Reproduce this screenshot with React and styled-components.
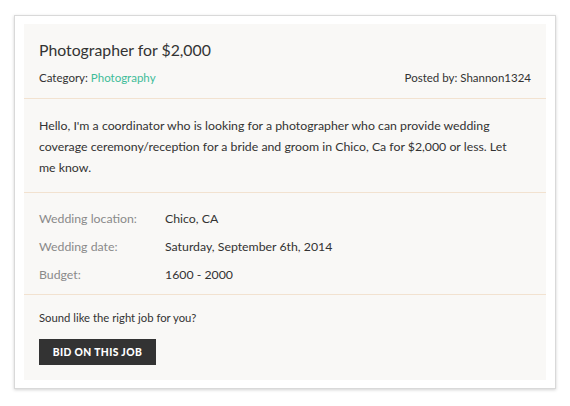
import React from "react";
import styled, { createGlobalStyle } from "styled-components";

const Global = createGlobalStyle`
  html, body { margin: 0; padding: 0; background: #fff; }
  body { font-family: "Lato", "Noto Sans", sans-serif; color: #333; }
`;

const Page = styled.div`
  padding: 15px 14px 16px 14px;
`;

const Frame = styled.div`
  background: #fff;
  border: 1px solid #d9d9d9;
  box-shadow: 0 1px 3px rgba(0,0,0,0.18);
  padding: 8px 9px 8px 9px;
`;

const Panel = styled.div`
  background: #f9f8f6;
`;

const Section = styled.div`
  padding: ${(p) => p.$pad};
  border-bottom: ${(p) => (p.$last ? "none" : "1px solid #f2e2d0")};
`;

const Title = styled.h1`
  margin: 0;
  font-size: 15.8px;
  font-weight: 400;
  line-height: 20px;
  color: #333;
`;

const MetaRow = styled.div`
  display: flex;
  justify-content: space-between;
  margin-top: 11px;
  font-size: 11.5px;
  line-height: 14px;
  color: #333;
`;

const Link = styled.a`
  color: #3fbc99;
  text-decoration: none;
`;

const Body = styled.p`
  margin: 0;
  max-width: 472px;
  font-size: 12.3px;
  line-height: 21px;
  color: #333;
`;

const Details = styled.div`
  display: grid;
  grid-template-columns: 126px 1fr;
  row-gap: 12px;
  font-size: 12.3px;
  line-height: 16px;
`;

const Label = styled.div`
  color: #8a8a8a;
`;

const Value = styled.div`
  color: #333;
`;

const Prompt = styled.div`
  font-size: 11.3px;
  line-height: 14px;
  color: #333;
`;

const Button = styled.button`
  margin-top: 14px;
  display: block;
  background: #333;
  color: #fff;
  border: none;
  font-family: "Lato", "Noto Sans", sans-serif;
  font-weight: 900;
  font-size: 10.3px;
  letter-spacing: 0.4px;
  text-transform: uppercase;
  width: 117px;
  height: 26px;
  padding: 0;
`;

export default function App() {
  return (
    <>
      <Global />
      <Page>
        <Frame>
          <Panel>
            <Section $pad="16px 15px 13px 15px">
              <Title>Photographer for $2,000</Title>
              <MetaRow>
                <span>
                  Category: <Link href="#">Photography</Link>
                </span>
                <span>Posted by: Shannon1324</span>
              </MetaRow>
            </Section>
            <Section $pad="16px 15px 14px 15px">
              <Body>
                Hello, I'm a coordinator who is looking for a photographer who can provide wedding
                coverage ceremony/reception for a bride and groom in Chico, Ca for $2,000 or less. Let
                me know.
              </Body>
            </Section>
            <Section $pad="18px 15px 11px 15px">
              <Details>
                <Label>Wedding location:</Label>
                <Value>Chico, CA</Value>
                <Label>Wedding date:</Label>
                <Value>Saturday, September 6th, 2014</Value>
                <Label>Budget:</Label>
                <Value>1600 - 2000</Value>
              </Details>
            </Section>
            <Section $last $pad="16px 15px 15px 15px">
              <Prompt>Sound like the right job for you?</Prompt>
              <Button>Bid on this job</Button>
            </Section>
          </Panel>
        </Frame>
      </Page>
    </>
  );
}
